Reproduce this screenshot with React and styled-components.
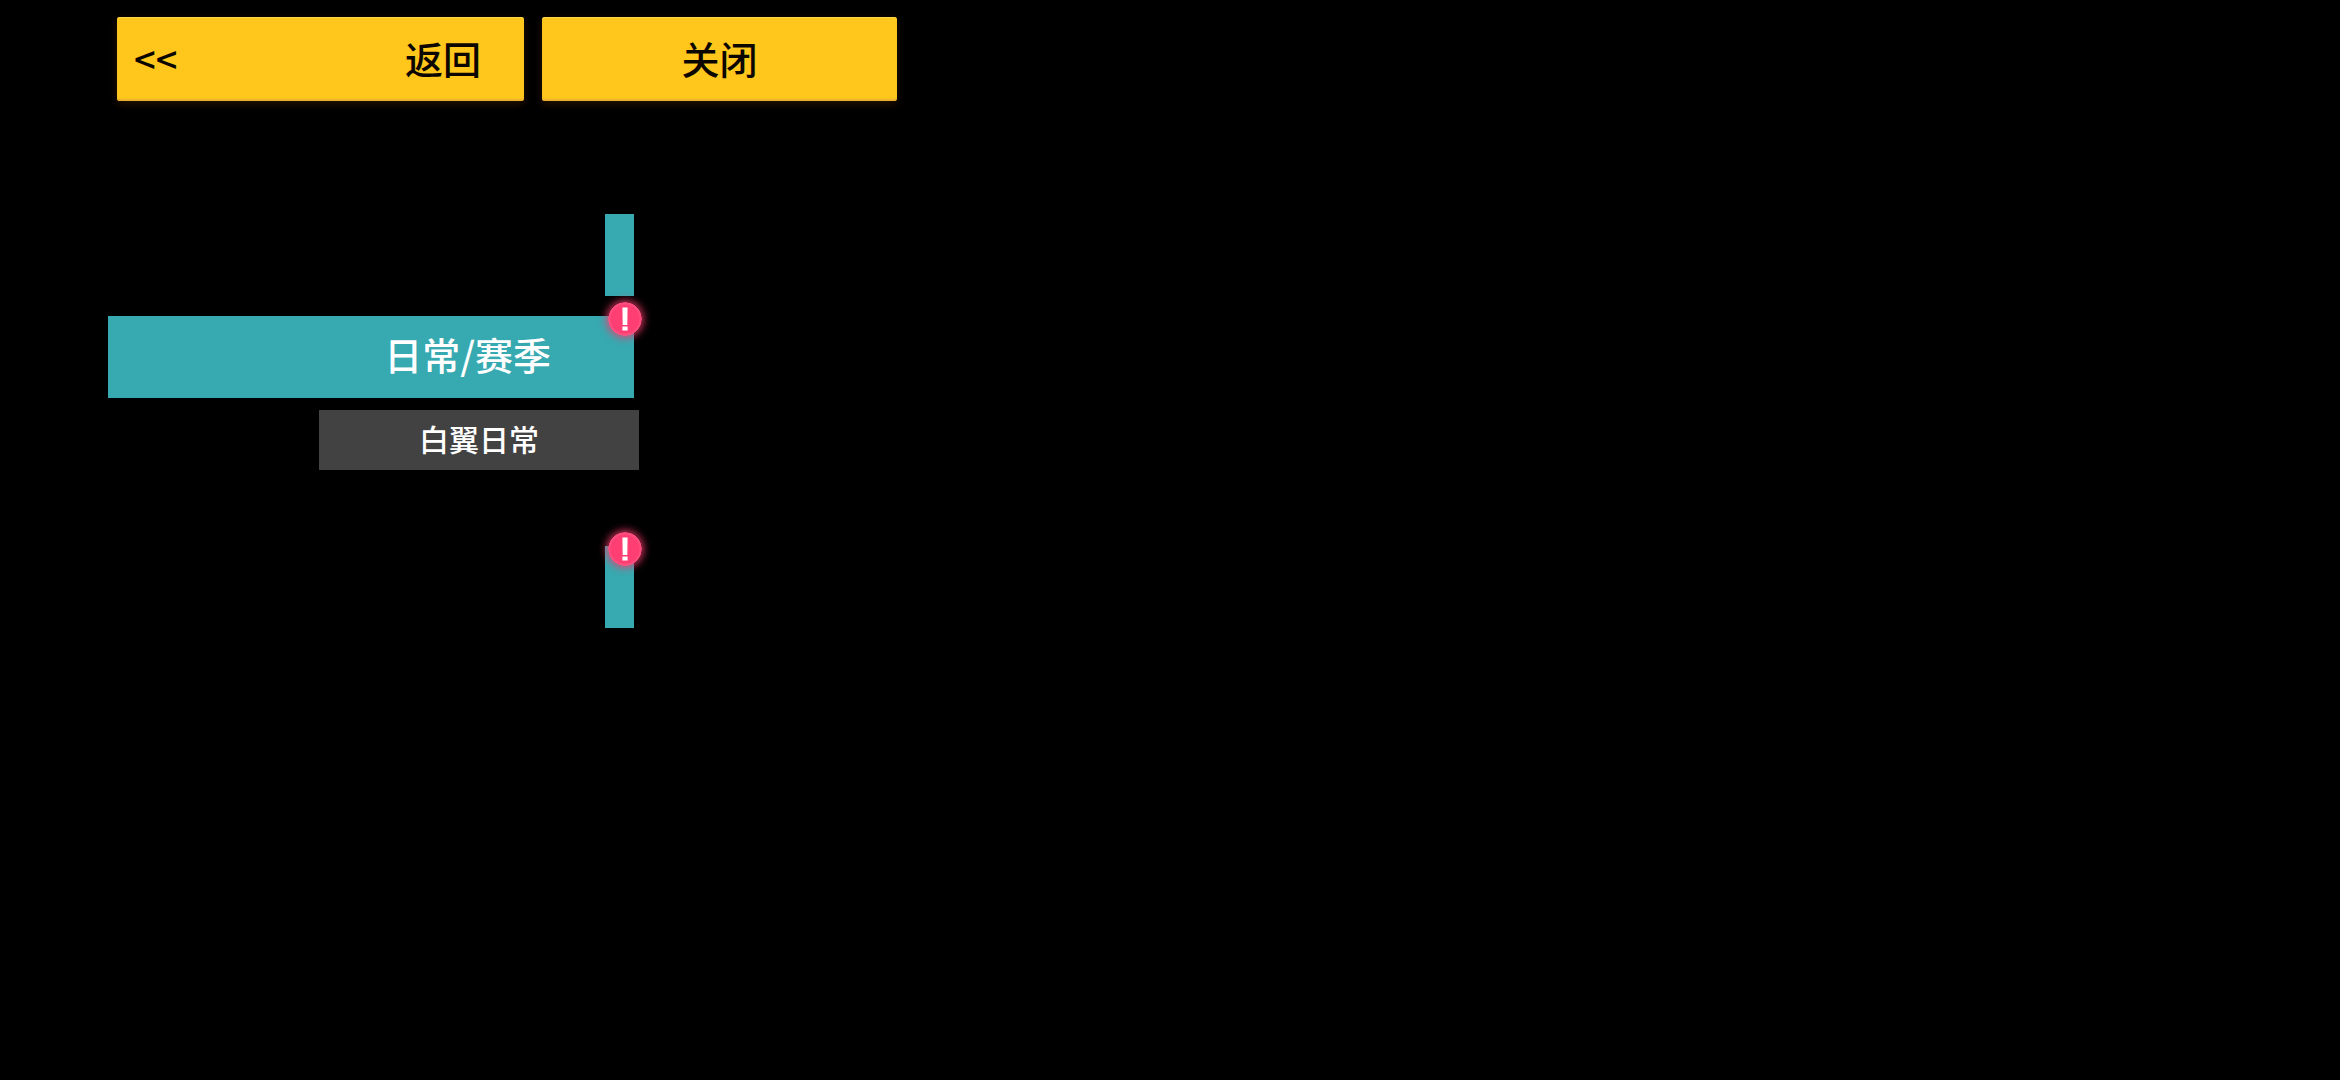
import React from "react";
import styled, { createGlobalStyle } from "styled-components";

const GlobalStyle = createGlobalStyle`
  *, *::before, *::after {
    box-sizing: border-box;
  }

  body {
    margin: 0;
    background: #000;
    font-family: "Noto Sans CJK SC", sans-serif;
    font-weight: 500;
  }

  button {
    border: 0;
    font: inherit;
    cursor: pointer;
  }
`;

const Page = styled.div`
  min-height: 100vh;
  background: #000;
`;

const Toolbar = styled.header`
  display: flex;
  gap: 18px;
  padding: 17px 117px 0;
`;

const ToolbarButton = styled.button`
  display: flex;
  flex: 0 1 ${(props) => (props.$wide ? "407px" : "355px")};
  align-items: center;
  justify-content: ${(props) => (props.$wide ? "space-between" : "center")};
  height: 84px;
  padding: ${(props) => (props.$wide ? "0 43px 2px 17px" : "0 0 2px")};
  border-radius: 3px;
  background: #ffc71c;
  box-shadow: inset 0 -2px 1px #eeb030, inset 0 1px 1px #ffd84a,
    0 3px 8px rgba(255, 120, 20, 0.15);
  color: #0c0600;
  font-size: 38px;
  line-height: 56px;
`;

const Menu = styled.nav`
  display: flex;
  flex-direction: column;
  align-items: flex-end;
  width: 100%;
  max-width: 639px;
  margin-top: 113px;
  padding-left: 108px;
`;

const Tab = styled.button`
  position: relative;
  display: flex;
  align-items: center;
  justify-content: flex-end;
  width: ${(props) => (props.$open ? "526px" : "29px")};
  max-width: 100%;
  height: 82px;
  margin-right: 5px;
  padding: ${(props) => (props.$open ? "0 83px 6px 0" : "0")};
  background: #37a9b0;
  color: #fff;
  font-size: 38px;
  line-height: 56px;

  & + & {
    margin-top: 20px;
  }
`;

const SubList = styled.div`
  display: flex;
  justify-content: flex-end;
  width: 100%;
  padding: 12px 0 76px;
`;

const SubTab = styled.button`
  flex: 0 1 320px;
  height: 60px;
  padding: 0 0 4px;
  background: #424242;
  color: #fff;
  font-size: 30px;
  line-height: 44px;
`;

const Badge = styled.svg`
  position: absolute;
  top: -14px;
  right: -8px;
  width: 34px;
  height: 34px;
  border-radius: 50%;
  box-shadow: 0 0 8px 1px #f43a6c;
`;

const Alert = () => (
  <Badge viewBox="0 0 34 34" aria-hidden="true">
    <circle cx="17" cy="17" r="17" fill="#ff4d7e" />
    <circle cx="17" cy="17" r="14.5" fill="#ff3f73" />
    <path d="M14.4 5.5h5.2l-.3 17.5h-4.6z" fill="#fff" />
    <path d="M14.4 24.5h5.2v4h-5.2z" fill="#fff" />
  </Badge>
);

const App = () => {
  return (
    <Page>
      <GlobalStyle />
      <Toolbar>
        <ToolbarButton type="button" $wide>
          <span>&lt;&lt;</span>
          <span>返回</span>
        </ToolbarButton>
        <ToolbarButton type="button">关闭</ToolbarButton>
      </Toolbar>
      <Menu>
        <Tab type="button" aria-label="上一项" />
        <Tab type="button" $open>
          日常/赛季
          <Alert />
        </Tab>
        <SubList>
          <SubTab type="button">白翼日常</SubTab>
        </SubList>
        <Tab type="button" aria-label="下一项">
          <Alert />
        </Tab>
      </Menu>
    </Page>
  );
};

export default App;
